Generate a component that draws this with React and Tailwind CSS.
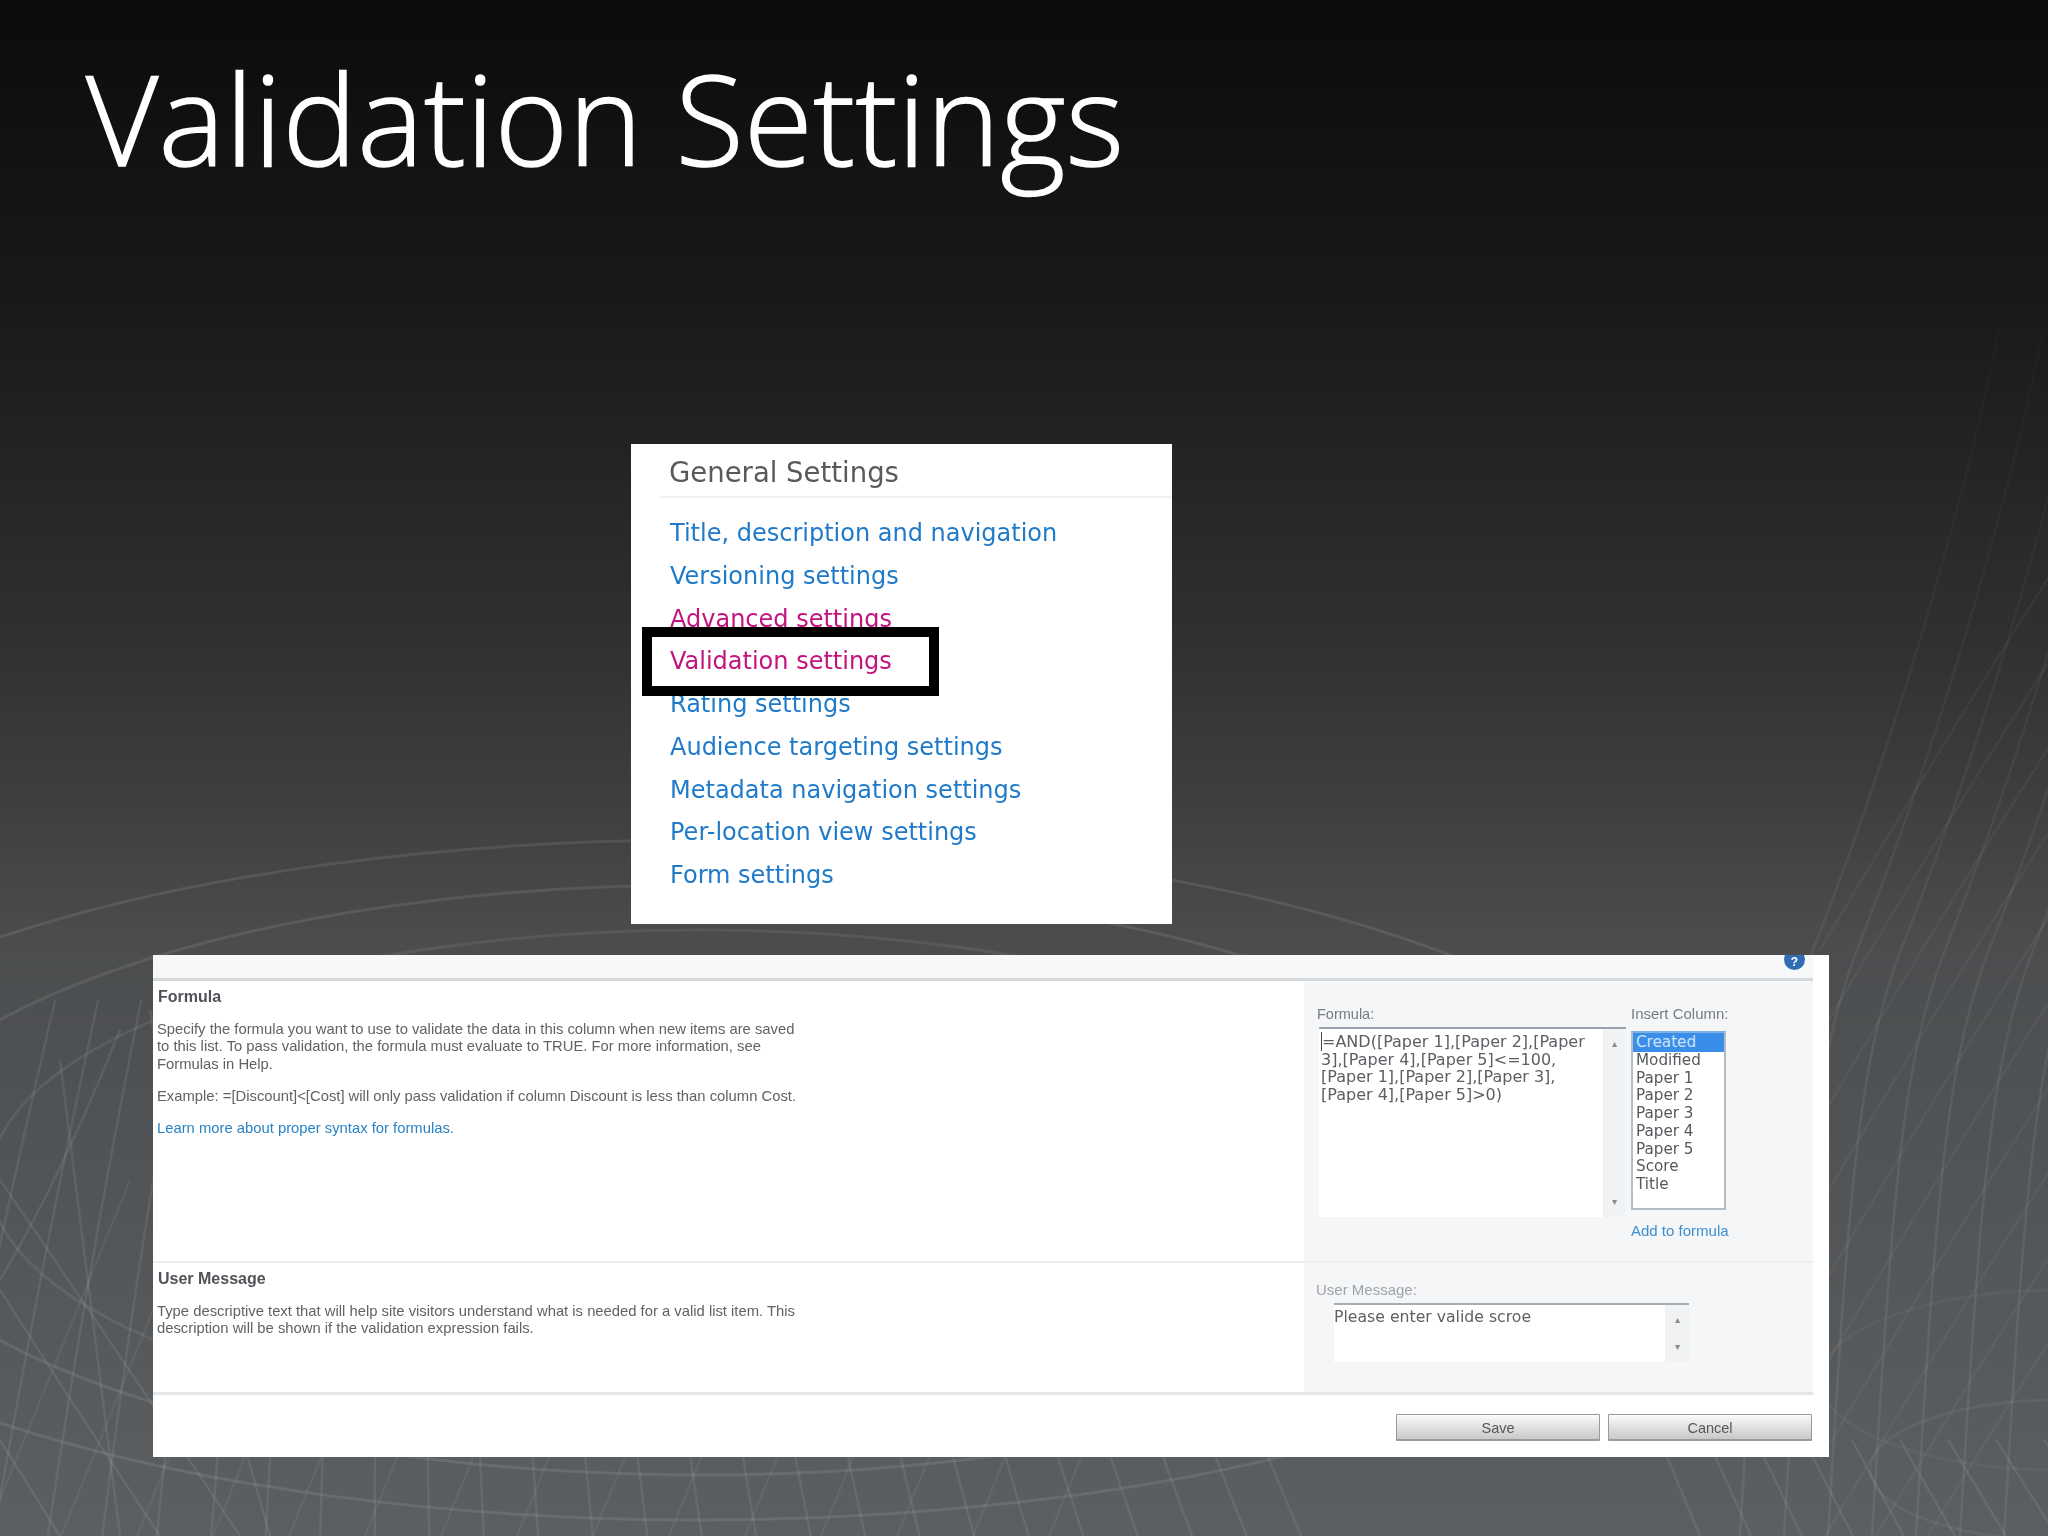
import React from "react";

const ellipses = [
  [1000, 340, 0.09],
  [833, 295, 0.09],
  [710, 250, 0.07],
];

const fanA = Array.from({ length: 26 }, (_, i) => {
  const x = -40 + i * 50;
  const d = (x - 640) * 0.1;
  return `M${x - d * 1.4} 1000 Q${x - d * 0.5} 1260 ${x + d * 0.9 + 40} 1536`;
});
const fanB = Array.from({ length: 15 }, (_, i) => {
  const x = 40 + i * 76;
  return `M${x + 90} 1180 L${x - 55} 1536`;
});
const leftCross = [
  "M0 1180 Q110 1340 240 1536",
  "M0 1290 Q70 1400 160 1536",
  "M0 1440 L60 1536",
  "M120 1030 Q60 1180 0 1280",
  "M150 1010 Q190 1260 270 1536",
  "M60 1060 Q90 1300 120 1536",
];
const rightFan = Array.from({ length: 7 }, (_, i) => {
  const o = i * 44;
  return `M${2000 + o} 325 C${1970 + o} 480 ${1900 + o} 730 ${1813 + o} 950 C${1770 + o} 1060 ${1760 + o} 1200 ${1740 + o} 1536`;
});
const rightCross = Array.from({ length: 10 }, (_, i) => {
  const y = 560 + i * 85;
  return `M2060 ${y} Q1950 ${y + 170} 1820 ${y + 390}`;
});
const rightBottom = Array.from({ length: 9 }, (_, i) => {
  const x = 1660 + i * 48;
  return `M${x} 1440 L${x + 40 + i * 3} 1536`;
});

function Backdrop() {
  return (
    <svg className="absolute inset-0 w-full h-full" viewBox="0 0 2048 1536" fill="none" aria-hidden="true">
      <defs>
        <linearGradient id="rf" x1="0" y1="300" x2="0" y2="1100" gradientUnits="userSpaceOnUse">
          <stop offset="0" stopColor="#fff" stopOpacity="0.01" />
          <stop offset="1" stopColor="#fff" stopOpacity="0.07" />
        </linearGradient>
      </defs>
      <g stroke="#ffffff" strokeWidth="3">
        {ellipses.map(([rx, ry, op], i) => (
          <ellipse key={i} cx="700" cy="1180" rx={rx} ry={ry} strokeOpacity={op} />
        ))}
        <ellipse cx="2060" cy="1380" rx="240" ry="90" strokeOpacity="0.04" />
        <ellipse cx="2060" cy="1470" rx="190" ry="70" strokeOpacity="0.05" />
      </g>
      <g stroke="#ffffff" strokeWidth="2.5" strokeOpacity="0.08">
        {fanA.map((d, i) => <path key={i} d={d} />)}
        {fanB.map((d, i) => <path key={i} d={d} strokeOpacity="0.05" />)}
        {leftCross.map((d, i) => <path key={i} d={d} />)}
        {rightCross.map((d, i) => <path key={i} d={d} strokeOpacity="0.045" />)}
        {rightBottom.map((d, i) => <path key={i} d={d} />)}
      </g>
      <g stroke="url(#rf)" strokeWidth="2.5">
        {rightFan.map((d, i) => <path key={i} d={d} />)}
      </g>
    </svg>
  );
}

const links = [
  ["Title, description and navigation", false],
  ["Versioning settings", false],
  ["Advanced settings", true],
  ["Validation settings", true],
  ["Rating settings", false],
  ["Audience targeting settings", false],
  ["Metadata navigation settings", false],
  ["Per-location view settings", false],
  ["Form settings", false],
];

function GeneralSettings() {
  return (
    <section className="relative ml-[631px] w-[541px] h-[480px] bg-white font-['DejaVu_Sans',sans-serif]">
      <div className="ml-[29px] h-[54px] border-b-2 border-[#eef0f2] pl-[9px] pt-[11px] text-[27.5px] leading-[34px] text-[#5a5a5a] blur-[0.4px]">
        General Settings
      </div>
      <ul className="mt-[14px] pl-[39px] text-[24px] leading-[42.75px] blur-[0.4px]">
        {links.map(([t, visited]) => (
          <li key={t} className={visited ? "text-[#c4127e]" : "text-[#1f7aca]"}>{t}</li>
        ))}
      </ul>
      <div className="absolute left-[11px] top-[183px] w-[297px] h-[69px] border-[10.5px] border-black" />
    </section>
  );
}

const columns = ["Created", "Modified", "Paper 1", "Paper 2", "Paper 3", "Paper 4", "Paper 5", "Score", "Title"];

function ScrollTrack({ className }) {
  return (
    <div className={`flex flex-col justify-between items-center py-[10px] text-[#8a8a8a] text-[10px] leading-[10px] ${className}`}>
      <span>▴</span>
      <span>▾</span>
    </div>
  );
}

function ValidationForm() {
  return (
    <section className="relative ml-[153px] mt-[31px] w-[1676px] h-[502px] bg-white pr-[16px] overflow-hidden flex flex-col font-['Liberation_Sans',sans-serif]">
      <div className="relative h-[26px] shrink-0 bg-[#f7f8f9] border-b-[3px] border-[#d6d9dc]">
        <div className="absolute right-[8px] -top-[6px] w-[21px] h-[21px] rounded-full bg-[#2f6db5] text-white text-[12px] leading-[14px] pt-[6px] text-center font-bold blur-[0.5px]">?</div>
      </div>

      <div className="flex h-[282px] shrink-0 border-b-2 border-[#eceef0]">
        <div className="w-[1151px] pl-[4px] pt-[7px] text-[14.8px] leading-[17.4px] text-[#5f6266] blur-[0.7px]">
          <h3 className="pl-[1px] font-bold text-[16px] leading-[18px] text-[#4f5256]">Formula</h3>
          <p className="mt-[15px]">
            Specify the formula you want to use to validate the data in this column when new items are saved<br />
            to this list. To pass validation, the formula must evaluate to TRUE. For more information, see<br />
            Formulas in Help.
          </p>
          <p className="mt-[15px]">Example: =[Discount]&lt;[Cost] will only pass validation if column Discount is less than column Cost.</p>
          <p className="mt-[14px] text-[#2a82c4]">Learn more about proper syntax for formulas.</p>
        </div>
        <div className="flex-1 bg-[#f5f6f7] pl-[13px] pt-[24px] flex gap-[5px]">
          <div className="w-[309px]">
            <div className="h-[22px] text-[14.5px] leading-[18px] text-[#777b80] blur-[0.7px]">Formula:</div>
            <div className="ml-[2px] flex h-[190px] border-t-2 border-[#9aa3ab] bg-[#f1f2f3]">
              <div className="w-[284px] bg-white pl-[2px] pt-[4px] font-['DejaVu_Sans',sans-serif] text-[16px] leading-[17.7px] text-[#5c6064] blur-[0.6px]">
                <span className="border-l border-[#444]">=</span>AND([Paper 1],[Paper 2],[Paper<br />
                3],[Paper 4],[Paper 5]&lt;=100,<br />
                [Paper 1],[Paper 2],[Paper 3],<br />
                [Paper 4],[Paper 5]&gt;0)
              </div>
              <ScrollTrack className="flex-1" />
            </div>
          </div>
          <div className="w-[95px]">
            <div className="h-[26px] whitespace-nowrap text-[15px] leading-[18px] text-[#777b80] blur-[0.7px]">Insert Column:</div>
            <ul className="h-[179px] border-2 border-[#b4bcc4] border-t-[#7fb0e6] bg-white font-['DejaVu_Sans',sans-serif] text-[15.2px] leading-[17.75px] text-[#55595d]">
              {columns.map((c, i) => (
                <li key={c} className={i === 0 ? "bg-[#3a8de8] text-[#cfe4fb] pl-[3px] pt-[1px]" : "pl-[3px] blur-[0.6px]"}>{c}</li>
              ))}
            </ul>
            <div className="mt-[12px] whitespace-nowrap text-[15px] leading-[18px] text-[#3d8fd0] blur-[0.7px]">Add to formula</div>
          </div>
        </div>
      </div>

      <div className="flex h-[132px] shrink-0 border-b-[3px] border-[#e3e5e8]">
        <div className="w-[1151px] pl-[4px] pt-[7px] text-[14.8px] leading-[17.4px] text-[#5f6266] blur-[0.7px]">
          <h3 className="pl-[1px] font-bold text-[16px] leading-[18px] text-[#4f5256]">User Message</h3>
          <p className="mt-[15px]">
            Type descriptive text that will help site visitors understand what is needed for a valid list item. This<br />
            description will be shown if the validation expression fails.
          </p>
        </div>
        <div className="flex-1 bg-[#f5f6f7] pl-[12px] pt-[18px]">
          <div className="h-[22px] text-[15px] leading-[18px] text-[#a0a3a6] blur-[0.6px]">User Message:</div>
          <div className="ml-[18px] w-[355px] h-[59px] flex border-t-2 border-[#a8adb2] bg-[#f1f2f3]">
            <div className="w-[331px] bg-white pt-[2px] font-['DejaVu_Sans',sans-serif] text-[15.7px] leading-[20px] text-[#5c6064] blur-[0.6px]">Please enter valide scroe</div>
            <ScrollTrack className="flex-1" />
          </div>
        </div>
      </div>

      <div className="flex-1 flex justify-end gap-[8px] pt-[19px] pr-[1px]">
        {["Save", "Cancel"].map((b) => (
          <div key={b} className="w-[204px] h-[27px] rounded-[1px] border border-[#9a9a9a] border-b-2 bg-linear-to-b from-[#fbfbfb] to-[#c9c9c9] text-center text-[14.5px] leading-[27px] text-[#55585b]">
            <span className="inline-block blur-[0.7px]">{b}</span>
          </div>
        ))}
      </div>
    </section>
  );
}

export default function App() {
  return (
    <div className="relative w-[2048px] h-[1536px] overflow-hidden bg-[linear-gradient(180deg,#0a0b0c_0px,#17191b_300px,#2f3032_637px,#3e3f41_805px,#4b4d4f_950px,#5c5f61_1536px)]">
      <Backdrop />
      <div className="relative">
        <h1 className="pl-[86px] pt-[28px] h-[444px] font-['Open_Sans',sans-serif] font-light text-[125px] tracking-[0.4px] leading-[180px] text-white [-webkit-text-stroke:1.5px_white]">
          Validation Settings
        </h1>
        <GeneralSettings />
        <ValidationForm />
      </div>
    </div>
  );
}
